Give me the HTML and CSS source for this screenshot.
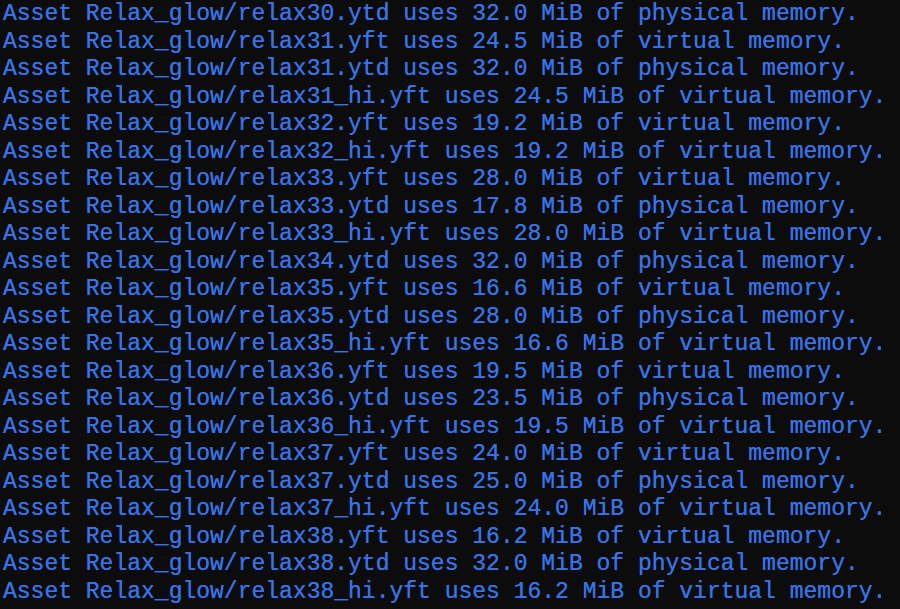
FILE: index.html
```html
<!DOCTYPE html>
<html>
<head>
<meta charset="utf-8">
<link rel="stylesheet" href="styles.css">
</head>
<body>
<div class="console">
<div class="line">Asset Relax_glow/relax30.ytd uses 32.0 MiB of physical memory.</div>
<div class="line">Asset Relax_glow/relax31.yft uses 24.5 MiB of virtual memory.</div>
<div class="line">Asset Relax_glow/relax31.ytd uses 32.0 MiB of physical memory.</div>
<div class="line">Asset Relax_glow/relax31_hi.yft uses 24.5 MiB of virtual memory.</div>
<div class="line">Asset Relax_glow/relax32.yft uses 19.2 MiB of virtual memory.</div>
<div class="line">Asset Relax_glow/relax32_hi.yft uses 19.2 MiB of virtual memory.</div>
<div class="line">Asset Relax_glow/relax33.yft uses 28.0 MiB of virtual memory.</div>
<div class="line">Asset Relax_glow/relax33.ytd uses 17.8 MiB of physical memory.</div>
<div class="line">Asset Relax_glow/relax33_hi.yft uses 28.0 MiB of virtual memory.</div>
<div class="line">Asset Relax_glow/relax34.ytd uses 32.0 MiB of physical memory.</div>
<div class="line">Asset Relax_glow/relax35.yft uses 16.6 MiB of virtual memory.</div>
<div class="line">Asset Relax_glow/relax35.ytd uses 28.0 MiB of physical memory.</div>
<div class="line">Asset Relax_glow/relax35_hi.yft uses 16.6 MiB of virtual memory.</div>
<div class="line">Asset Relax_glow/relax36.yft uses 19.5 MiB of virtual memory.</div>
<div class="line">Asset Relax_glow/relax36.ytd uses 23.5 MiB of physical memory.</div>
<div class="line">Asset Relax_glow/relax36_hi.yft uses 19.5 MiB of virtual memory.</div>
<div class="line">Asset Relax_glow/relax37.yft uses 24.0 MiB of virtual memory.</div>
<div class="line">Asset Relax_glow/relax37.ytd uses 25.0 MiB of physical memory.</div>
<div class="line">Asset Relax_glow/relax37_hi.yft uses 24.0 MiB of virtual memory.</div>
<div class="line">Asset Relax_glow/relax38.yft uses 16.2 MiB of virtual memory.</div>
<div class="line">Asset Relax_glow/relax38.ytd uses 32.0 MiB of physical memory.</div>
<div class="line">Asset Relax_glow/relax38_hi.yft uses 16.2 MiB of virtual memory.</div>
</div>
</body>
</html>
```
FILE: styles.css
```css
html, body {
  margin: 0;
  padding: 0;
  background: #0c0c0c;
  height: 100%;
  overflow: hidden;
}
.console {
  padding: 1px 0 0 3px;
  font-family: "Liberation Mono", "DejaVu Sans Mono", monospace;
  font-size: 23px;
  line-height: 27.5px;
  color: #3872e8;
}
.line {
  white-space: pre;
  text-shadow: 0 0 0.6px #3872e8;
}
```
